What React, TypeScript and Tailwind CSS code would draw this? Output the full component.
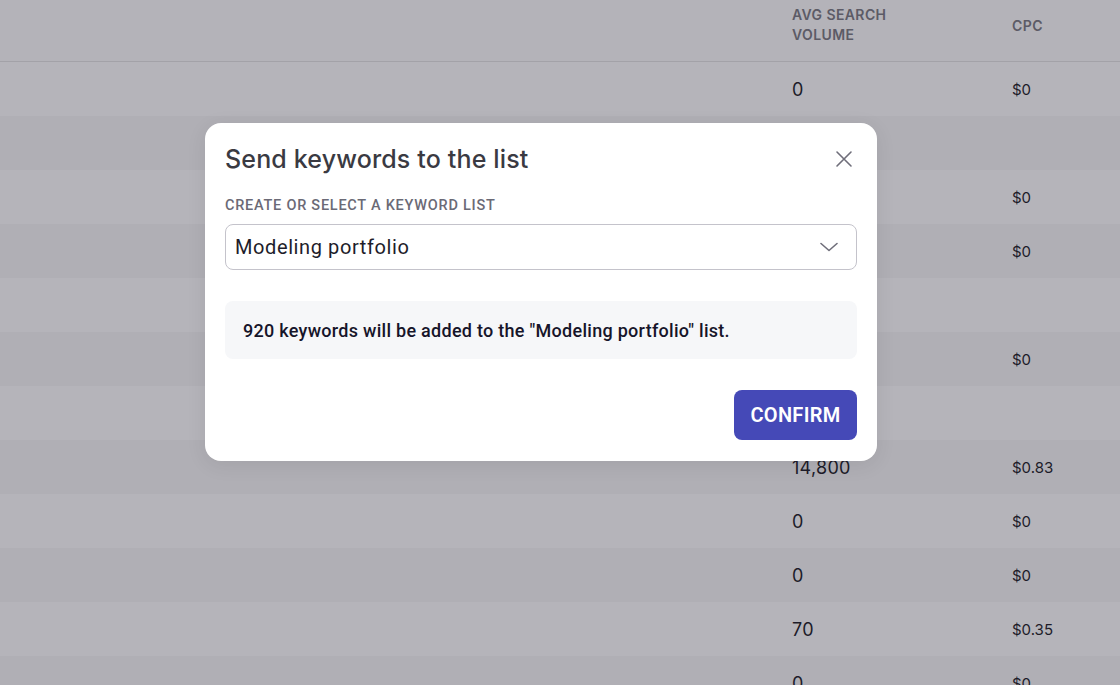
import React from "react";

const rows: { vol: string; cpc: string }[] = [
  { vol: "0", cpc: "$0" },
  { vol: "", cpc: "" },
  { vol: "0", cpc: "$0" },
  { vol: "0", cpc: "$0" },
  { vol: "", cpc: "" },
  { vol: "0", cpc: "$0" },
  { vol: "", cpc: "" },
  { vol: "14,800", cpc: "$0.83" },
  { vol: "0", cpc: "$0" },
  { vol: "0", cpc: "$0" },
  { vol: "70", cpc: "$0.35" },
  { vol: "0", cpc: "$0" },
];

export default function App() {
  return (
    <div className="relative w-[1120px] h-[685px] overflow-hidden bg-[#b4b3b9] font-['Roboto',sans-serif]">
      <div className="flex h-[62px] border-b border-[#a3a2a8] bg-[#b4b3b9]">
        <div className="w-[792px]" />
        <div className="w-[220px] pt-[5px] text-[14px] leading-[20px] font-semibold tracking-[0.4px] text-[#5c5b66] font-['Inter',sans-serif]">
          AVG SEARCH
          <br />
          VOLUME
        </div>
        <div className="flex-1 pt-[16px] text-[14px] leading-[20px] font-semibold tracking-[0.4px] text-[#5c5b66] font-['Inter',sans-serif]">
          CPC
        </div>
      </div>
      {rows.map((r, i) => (
        <div
          key={i}
          className={`flex h-[54px] items-center ${i % 2 === 0 ? "bg-[#b5b4ba]" : "bg-[#b0afb5]"}`}
        >
          <div className="w-[792px]" />
          <div className="w-[220px] text-[18px] tracking-[0.3px] text-[#1d1c29] font-['Inter',sans-serif]">{r.vol}</div>
          <div className="flex-1 pt-[2px] text-[15px] text-[#1d1c29] font-['Inter',sans-serif]">{r.cpc}</div>
        </div>
      ))}

      <div className="absolute left-[205px] top-[123px] w-[672px] rounded-[16px] bg-white px-[20px] pt-[20px] pb-[21px] shadow-[0_4px_20px_rgba(0,0,0,0.08)]">
        <div className="flex items-center justify-between h-[32px]">
          <h2 className="text-[25px] leading-[32px] font-medium text-[#3a3a42] font-['Inter',sans-serif] tracking-[0.15px]">
            Send keywords to the list
          </h2>
          <button className="mr-[4px] text-[#6f6e7a]">
            <svg width="18" height="18" viewBox="0 0 18 18" fill="none" stroke="currentColor" strokeWidth="1.6" strokeLinecap="round">
              <path d="M2 2L16 16M16 2L2 16" />
            </svg>
          </button>
        </div>
        <div className="mt-[23px] text-[14.5px] leading-[16px] font-medium tracking-[0.75px] text-[#6b6a76] uppercase">
          Create or select a keyword list
        </div>
        <div className="mt-[10px] flex h-[46px] items-center justify-between rounded-[8px] border border-[#c4c3cb] pl-[9px] pr-[18px]">
          <span className="text-[20px] tracking-[0.6px] text-[#1e1d2a]">Modeling portfolio</span>
          <svg width="18" height="10" viewBox="0 0 18 10" fill="none" stroke="#6f6e7a" strokeWidth="1.6" strokeLinecap="round" strokeLinejoin="round">
            <path d="M1 1.5L9 8.5L17 1.5" />
          </svg>
        </div>
        <div className="mt-[31px] flex h-[58px] items-center rounded-[8px] bg-[#f6f7f9] px-[18px]">
          <span className="text-[18px] font-medium tracking-[0.28px] text-[#16152a]">
            920 keywords will be added to the "Modeling portfolio" list.
          </span>
        </div>
        <div className="mt-[31px] flex justify-end">
          <button className="h-[50px] w-[123px] rounded-[8px] bg-[#4549b7] text-[20px] font-semibold tracking-[0.3px] text-white">
            CONFIRM
          </button>
        </div>
      </div>
    </div>
  );
}
